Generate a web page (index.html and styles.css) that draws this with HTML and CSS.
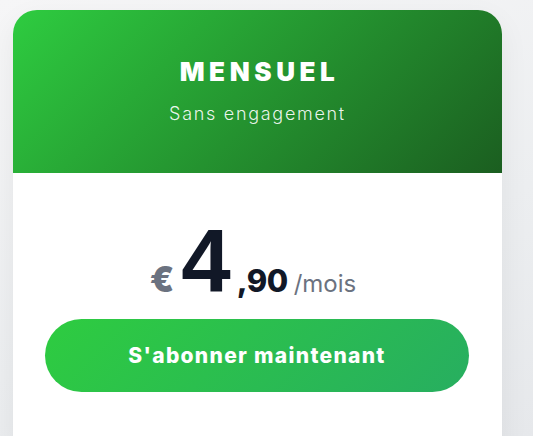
FILE: index.html
```html
<!DOCTYPE html>
<html lang="fr">
<head>
<meta charset="utf-8">
<link rel="stylesheet" href="styles.css">
</head>
<body>
<div class="page">
  <div class="card">
    <div class="card-header">
      <h2 class="plan-title">MENSUEL</h2>
      <p class="plan-sub">Sans engagement</p>
    </div>
    <div class="card-body">
      <div class="price">
        <span class="currency">€</span>
        <span class="amount">4</span>
        <span class="cents">,90</span>
        <span class="period">/mois</span>
      </div>
      <button class="cta">S'abonner maintenant</button>
    </div>
  </div>
</div>
</body>
</html>
```
FILE: styles.css
```css
html, body {
  margin: 0;
  height: 100%;
}
body {
  background: linear-gradient(160deg, #f6f6f7 0%, #eceef0 60%, #e6e8eb 100%);
  font-family: "Inter", "Noto Sans", sans-serif;
  overflow: hidden;
}
.page {
  padding: 10px 0 0 13px;
}
.card {
  width: 489px;
  background: #ffffff;
  border-radius: 24px 24px 0 0;
  overflow: hidden;
  box-shadow: 0 10px 30px rgba(0, 0, 0, 0.06);
  height: 440px;
}
.card-header {
  background: linear-gradient(135deg, #2ecc40 0%, #1b5e20 100%);
  height: 163px;
  box-sizing: border-box;
  padding-top: 47px;
  text-align: center;
  color: #fff;
}
.plan-title {
  margin: 0;
  font-size: 26px;
  font-weight: 900;
  letter-spacing: 4.6px;
  padding-left: 4px;
  line-height: 30px;
}
.plan-sub {
  margin: 16px 0 0;
  font-size: 18px;
  font-weight: 300;
  letter-spacing: 1.7px;
  line-height: 22px;
  color: rgba(255, 255, 255, 0.92);
}
.card-body {
  padding: 44px 33px 0 32px;
}
.price {
  display: flex;
  justify-content: center;
  align-items: baseline;
  line-height: 1;
  padding-right: 8px;
}
.currency {
  font-size: 35px;
  font-weight: 900;
  color: #6b7280;
  margin-right: 7px;
}
.amount {
  font-family: "Liberation Sans", "Inter", sans-serif;
  font-size: 89px;
  font-weight: 700;
  color: #111827;
}
.cents {
  font-size: 31px;
  font-weight: 800;
  color: #111827;
  margin-left: 6px;
  letter-spacing: -0.5px;
}
.period {
  font-size: 24px;
  font-weight: 400;
  color: #6b7280;
  margin-left: 6px;
}
.cta {
  display: block;
  width: 100%;
  height: 73px;
  margin-top: 13px;
  border: none;
  border-radius: 37px;
  background: linear-gradient(135deg, #2ecc40 0%, #27ae60 100%);
  color: #fff;
  font-family: "Inter", "Noto Sans", sans-serif;
  font-size: 21px;
  font-weight: 800;
  letter-spacing: 1.3px;
}
```
